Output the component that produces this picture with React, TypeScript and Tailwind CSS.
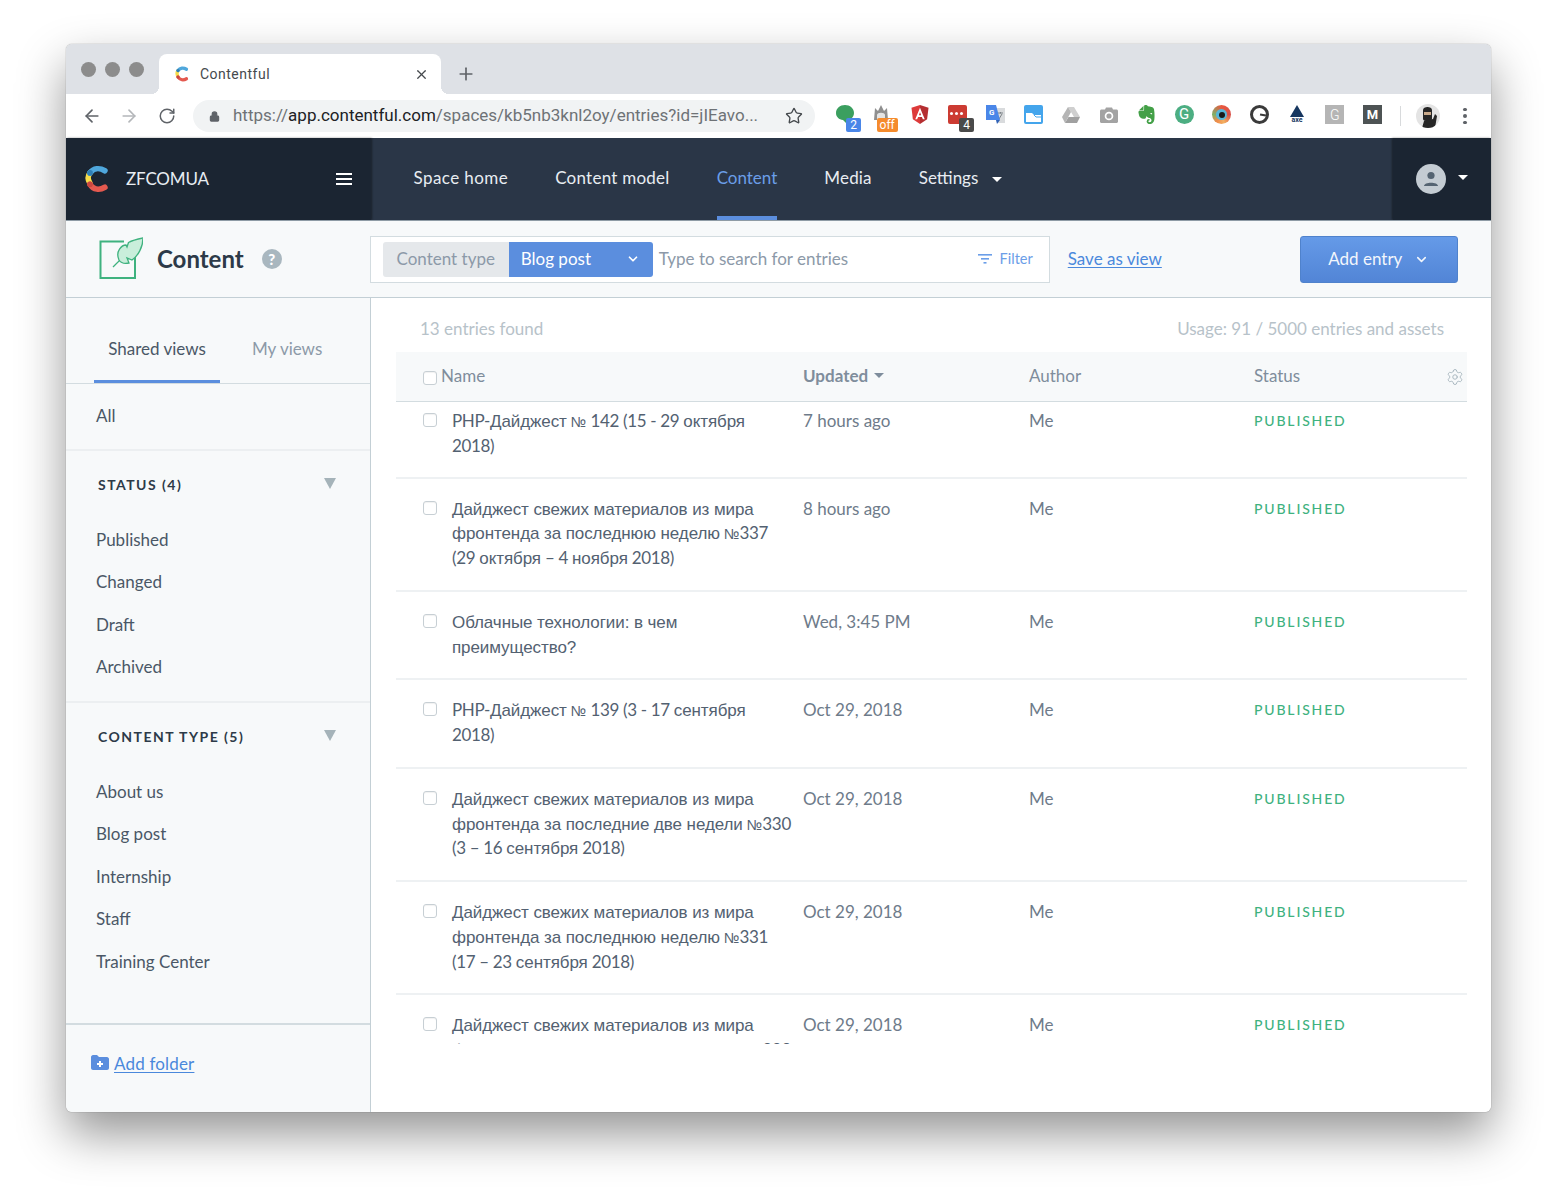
import { ArrowLeft, ArrowRight, ChevronDown, Lock, Plus, RotateCw, Settings, Star, X } from "lucide-react";
import { SiEvernote } from "react-icons/si";

const FONT = "font-['Lato','Liberation_Sans',sans-serif]";

const statusItems = ["Published", "Changed", "Draft", "Archived"];
const typeItems = ["About us", "Blog post", "Internship", "Staff", "Training Center"];

interface Entry {
  lines: string[];
  updated: string;
}

const entries: Entry[] = [
  { lines: ["PHP-Дайджест № 142 (15 - 29 октября", "2018)"], updated: "7 hours ago" },
  { lines: ["Дайджест свежих материалов из мира", "фронтенда за последнюю неделю №337", "(29 октября – 4 ноября 2018)"], updated: "8 hours ago" },
  { lines: ["Облачные технологии: в чем", "преимущество?"], updated: "Wed, 3:45 PM" },
  { lines: ["PHP-Дайджест № 139 (3 - 17 сентября", "2018)"], updated: "Oct 29, 2018" },
  { lines: ["Дайджест свежих материалов из мира", "фронтенда за последние две недели №330", "(3 – 16 сентября 2018)"], updated: "Oct 29, 2018" },
  { lines: ["Дайджест свежих материалов из мира", "фронтенда за последнюю неделю №331", "(17 – 23 сентября 2018)"], updated: "Oct 29, 2018" },
  { lines: ["Дайджест свежих материалов из мира", "фронтенда за последние две недели №329"], updated: "Oct 29, 2018" },
];

// cyrillic falls back to a helvetica-like face in the app, latin stays in the ui font
function MixedLine({ text }: { text: string }) {
  const parts = text.split(/([А-Яа-яЁё:?]+(?: [А-Яа-яЁё:?]+)*|№)/);
  return (
    <div className="h-[24.75px]">
      {parts.map((part, i) =>
        i % 2 === 1 ? (
          <span
            key={i}
            className={
              part === "№"
                ? "font-['Liberation_Sans',sans-serif] text-[14.5px]"
                : "font-['Liberation_Sans',sans-serif] tracking-[-0.005em]"
            }
          >
            {part}
          </span>
        ) : (
          <span key={i} className="tracking-[-0.02em]">
            {part}
          </span>
        ),
      )}
    </div>
  );
}

function ContentfulLogo({ size }: { size: number }) {
  return (
    <svg width={size} height={size} viewBox="0 0 28 32" fill="none" strokeLinecap="round" strokeWidth="6.5">
      <path d="M6 21 C3 16 3 13 6 9" stroke="#f7dd4a" />
      <path d="M6 9 C10 3.5 17 3 23 6.5" stroke="#4fa7dc" />
      <path d="M6 22 C10 28.5 17 29 23 25.5" stroke="#e4594f" />
      <circle cx="6" cy="9" r="3.25" fill="#2f7fb5" />
      <circle cx="6" cy="22" r="3.25" fill="#c9483f" />
    </svg>
  );
}

function Badge({ text, className }: { text: string; className: string }) {
  return (
    <span className={`absolute top-[17px] flex h-[14px] items-center justify-center rounded-[2px] font-['Roboto',sans-serif] text-[12px] leading-none text-white ${className}`}>
      {text}
    </span>
  );
}

function Ext({ children }: { children: React.ReactNode }) {
  return <div className="relative flex h-[30px] w-[37.7px] items-center justify-center pb-[3px]">{children}</div>;
}

function Extensions() {
  return (
    <div className="flex items-center">
      <Ext>
        <svg width="18" height="19" viewBox="0 0 18 19">
          <path d="M9 0 C14 0 18 3.4 18 8 C18 12.6 14 15 11 15 L11 19 L7 15 C3 14.6 0 12 0 8 C0 3.4 4 0 9 0 Z" fill="#3b9f5f" />
        </svg>
        <Badge text="2" className="left-[20px] w-[15px] bg-[#4a86e8]" />
      </Ext>
      <Ext>
        <svg width="16" height="15" viewBox="0 0 16 15" className="mb-[4px] mr-[3px]">
          <path d="M1 15 L2 3 L5 6 L8 0 L11 6 L14 3 L15 15 Z" fill="#8f8f8f" />
          <path d="M4 10 C4 7 12 7 12 10 V15 H4 Z" fill="#e4e4e4" />
        </svg>
        <Badge text="off" className="left-[13px] w-[21px] bg-[#f58b2c]" />
      </Ext>
      <Ext>
        <svg width="18" height="19" viewBox="0 0 18 20">
          <path d="M9 0 L18 3 L16.5 15 L9 20 Z" fill="#b52e31" />
          <path d="M9 0 L0 3 L1.5 15 L9 20 Z" fill="#dd3a3a" />
          <path d="M9 3 L4 15 H6 L7 12.5 H11 L12 15 H14 Z M7.8 10.8 L9 7.5 L10.2 10.8 Z" fill="#fff" />
        </svg>
      </Ext>
      <Ext>
        <span className="flex h-[19px] w-[19px] items-center gap-[2px] rounded-[2px] bg-[#cc3b32] pl-[2px] pb-[2px]">
          <i className="h-[3px] w-[3px] rounded-full bg-white" />
          <i className="h-[3px] w-[3px] rounded-full bg-white" />
          <i className="h-[3px] w-[3px] rounded-full bg-white" />
        </span>
        <Badge text="4" className="left-[20px] w-[15px] bg-[#4a4a4a]" />
      </Ext>
      <Ext>
        <svg width="19" height="19" viewBox="0 0 19 19">
          <path d="M8 3 H19 V18 H11 Z" fill="#d9dbdd" />
          <path d="M12 8 H17 M14.5 7 V8.5 M13 14 L16 9" stroke="#7d8388" strokeWidth="1" fill="none" />
          <path d="M0 0 H10 L14 15 H0 Z" fill="#4a86e8" />
          <path d="M10 15 H14 L11 19 Z" fill="#2f62b8" />
          <text x="3" y="10" fontSize="8" fontWeight="700" fill="#fff" fontFamily="Roboto">G</text>
        </svg>
      </Ext>
      <Ext>
        <svg width="19" height="19" viewBox="0 0 19 19">
          <rect width="19" height="19" rx="2" fill="#44a5ec" />
          <path d="M2 8 H8 L10 10 H17 V17 H2 Z" fill="#fff" />
          <path d="M10 10 L12 12 H17" stroke="#44a5ec" strokeWidth="1" fill="none" />
        </svg>
      </Ext>
      <Ext>
        <svg width="18" height="16" viewBox="0 0 18 16">
          <path d="M6 0 H12 L18 10 H12 Z" fill="#cfcfcf" />
          <path d="M6 0 L0 10 L3 16 L9 5 Z" fill="#b5b5b5" />
          <path d="M3 16 H15 L18 10 H6.5 Z" fill="#a0a0a0" />
        </svg>
      </Ext>
      <Ext>
        <svg width="18" height="16" viewBox="0 0 18 16">
          <path d="M1.5 2.5 H5 L6 0.5 H12 L13 2.5 H16.5 C17.3 2.5 18 3.2 18 4 V14.5 C18 15.3 17.3 16 16.5 16 H1.5 C0.7 16 0 15.3 0 14.5 V4 C0 3.2 0.7 2.5 1.5 2.5 Z" fill="#a3a3a3" />
          <circle cx="9" cy="9" r="4.3" fill="#fff" />
          <circle cx="9" cy="9" r="2.6" fill="#a3a3a3" />
        </svg>
      </Ext>
      <Ext>
        <SiEvernote size={19} className="text-[#43a047]" />
      </Ext>
      <Ext>
        <span className="flex h-[19px] w-[19px] items-center justify-center rounded-full bg-[#4cae82] font-['Roboto',sans-serif] text-[15px] font-normal leading-none text-white">G</span>
      </Ext>
      <Ext>
        <span className="flex h-[19px] w-[19px] items-center justify-center rounded-full bg-[conic-gradient(#e9583f,#d8504a_25%,#f3b061_45%,#ef8b4a_60%,#7fb069_75%,#e9583f)]">
          <span className="flex h-[11px] w-[11px] items-center justify-center rounded-full bg-[#58b6d8]">
            <span className="h-[6px] w-[6px] rounded-full bg-[#1a1a1a]" />
          </span>
        </span>
      </Ext>
      <Ext>
        <span className="flex h-[19px] w-[19px] items-center justify-end rounded-full border-[3px] border-[#3a3a3a]">
          <span className="h-[2px] w-[6px] rotate-[10deg] bg-[#3a3a3a]" />
        </span>
      </Ext>
      <Ext>
        <div className="flex flex-col items-center">
          <svg width="14" height="12" viewBox="0 0 14 12"><path d="M7 0 L14 12 H0 Z" fill="#16365f" /></svg>
          <span className="font-['Roboto',sans-serif] text-[7px] font-bold leading-[7px] text-[#16365f]">axe</span>
        </div>
      </Ext>
      <Ext>
        <span className="flex h-[19px] w-[19px] items-center justify-center bg-[#b5b5b5] font-['Roboto',sans-serif] text-[14px] font-light leading-none text-white">G</span>
      </Ext>
      <Ext>
        <span className="flex h-[19px] w-[19px] items-center justify-center bg-[#4d5354] font-['Roboto',sans-serif] text-[13px] font-bold leading-none text-white">M</span>
      </Ext>
      <span className="ml-[9px] h-[20px] w-px bg-[#d8dadc]" />
      <span className="ml-[15px] flex h-[24px] w-[24px] items-end justify-center overflow-hidden rounded-full bg-[#e4e4e4]">
        <svg width="20" height="22" viewBox="0 0 20 22">
          <path d="M5 4 C5 0 14 0 14 4 V13 C14 16 5 16 5 13 Z" fill="#262626" />
          <rect x="6" y="6" width="7" height="3" fill="#c9a98a" />
          <path d="M4 22 L6 15 L15 13 L17 8 L19 10 L17 22 Z" fill="#262626" />
        </svg>
      </span>
      <span className="ml-[23px] flex flex-col gap-[3px]">
        <i className="h-[3.5px] w-[3.5px] rounded-full bg-[#5f6368]" />
        <i className="h-[3.5px] w-[3.5px] rounded-full bg-[#5f6368]" />
        <i className="h-[3.5px] w-[3.5px] rounded-full bg-[#5f6368]" />
      </span>
    </div>
  );
}

function Caret({ className }: { className: string }) {
  return <span className={`inline-block h-0 w-0 border-x-[5px] border-t-[5px] border-x-transparent ${className}`} />;
}

function NavItem({ label, spacing, active, caret }: { label: string; spacing?: string; active?: boolean; caret?: boolean }) {
  return (
    <div className={`mx-[23.5px] flex h-full items-center border-b-[4px] pt-[2px] ${spacing ?? ""} ${active ? "border-[#5b8ede] text-[#6b9ee8]" : "border-transparent text-[#e8edf2]"}`}>
      {label}
      {caret && <Caret className="ml-[14px] mt-[3px] border-t-white" />}
    </div>
  );
}

function FilterGroup({ title, items }: { title: string; items: string[] }) {
  return (
    <div>
      <div className="flex items-center justify-between pl-[32px] pr-[34px] pt-[23px]">
        <span className="text-[14px] font-bold leading-[22px] tracking-[0.105em] text-[#2d3a48]">{title}</span>
        <Caret className="mb-[3px] border-x-[6px] border-t-[11px] border-t-[#a5b3b9]" />
      </div>
      <ul className="mt-[22.5px]">
        {items.map((item) => (
          <li key={item} className="h-[42.5px] pl-[30px] leading-[42.5px] text-[#4a5766]">
            {item}
          </li>
        ))}
      </ul>
    </div>
  );
}

function Checkbox() {
  return <span className="block h-[14px] w-[14px] rounded-[3px] border border-[#c7cfd4] bg-white shadow-[inset_0_1px_1px_rgba(0,0,0,0.06)]" />;
}

export default function App() {
  return (
    <div className={`h-[1200px] w-full overflow-hidden bg-white px-[66px] pt-[44px] ${FONT}`}>
      <div className="flex h-[1068px] w-[1425px] flex-col overflow-hidden rounded-[6px] text-[17px] shadow-[0_0_1px_rgba(0,0,0,0.6),0_22px_48px_rgba(0,0,0,0.42)]">
        {/* Tab strip */}
        <div className="flex h-[50px] shrink-0 items-end bg-[#dee1e6] pl-[15px]">
          <div className="mb-[17px] flex gap-[9px]">
            <span className="h-[15px] w-[15px] rounded-full bg-[#8c8c8c]" />
            <span className="h-[15px] w-[15px] rounded-full bg-[#8c8c8c]" />
            <span className="h-[15px] w-[15px] rounded-full bg-[#8c8c8c]" />
          </div>
          <div className="relative ml-[15px] flex h-[40px] w-[282px] items-center rounded-t-[8px] bg-white pl-[15px] pr-[12px] font-['Roboto',sans-serif] text-[14px] text-[#45494d]">
            <ContentfulLogo size={16} />
            <span className="ml-[10px] flex-1 tracking-[0.035em]">Contentful</span>
            <X size={15} strokeWidth={2} className="text-[#45494d]" />
            <span className="absolute -left-2 bottom-0 h-2 w-2 bg-[radial-gradient(circle_at_0_0,transparent_8px,white_8px)]" />
            <span className="absolute -right-2 bottom-0 h-2 w-2 bg-[radial-gradient(circle_at_100%_0,transparent_8px,white_8px)]" />
          </div>
          <Plus size={20} strokeWidth={2} className="mb-[10px] ml-[15px] text-[#5f6368]" />
        </div>

        {/* Toolbar */}
        <div className="flex h-[44px] shrink-0 items-center bg-white pl-[16px]">
          <ArrowLeft size={20} className="text-[#5f6368]" />
          <ArrowRight size={20} className="ml-[17px] text-[#b4b7ba]" />
          <RotateCw size={18} className="ml-[19px] text-[#5f6368]" />
          <div className="ml-[17px] flex h-[32px] w-[622px] items-center rounded-full bg-[#f1f3f4] pl-[16px] pr-[12px] font-['Roboto',sans-serif] text-[17px]">
            <Lock size={11} className="fill-[#5f6368] text-[#5f6368]" strokeWidth={2.5} />
            <span className="ml-[13px] flex-1 whitespace-nowrap text-[#6e7276]">
              https://<span className="text-[#202124]">app.contentful.com</span>/spaces/kb5nb3knl2oy/entries?id=jIEavo...
            </span>
            <Star size={18} strokeWidth={1.8} className="text-[#45494d]" />
          </div>
          <div className="ml-[11px]">
            <Extensions />
          </div>
        </div>

        {/* App nav */}
        <div className="flex h-[82px] shrink-0 bg-[#2a3647]">
          <div className="flex w-[305px] items-center bg-[#1b2532] pl-[17px] pr-[19px] shadow-[1px_0_2px_rgba(0,0,0,0.4)]">
            <ContentfulLogo size={28} />
            <span className="ml-[15px] flex-1 text-[17px] tracking-[-0.01em] text-[#e8edf2]">ZFCOMUA</span>
            <span className="flex w-[16px] flex-col gap-[3px]">
              <i className="h-[2px] bg-white" />
              <i className="h-[2px] bg-white" />
              <i className="h-[2px] bg-white" />
            </span>
          </div>
          <div className="ml-[19px] flex h-full flex-1 items-center">
            <NavItem label="Space home" spacing="tracking-[0.025em]" />
            <NavItem label="Content model" spacing="tracking-[0.015em]" />
            <NavItem label="Content" active />
            <NavItem label="Media" spacing="tracking-[0.01em]" />
            <NavItem label="Settings" caret />
          </div>
          <div className="flex w-[98px] items-center bg-[#1b2532] pl-[23px] shadow-[-1px_0_2px_rgba(0,0,0,0.4)]">
            <span className="flex h-[30px] w-[30px] items-center justify-center rounded-full bg-[#c4ccd3]">
              <svg width="18" height="18" viewBox="0 0 18 18" fill="#556472">
                <circle cx="9" cy="5.5" r="3.6" />
                <path d="M2 16 C2 11.5 16 11.5 16 16 Z" />
              </svg>
            </span>
            <Caret className="mb-[3px] ml-[12px] border-t-white" />
          </div>
        </div>

        {/* Workbench header */}
        <div className="flex h-[78px] shrink-0 items-center border-y border-b-[#c3cfd5] border-t-[#8e9ba5] bg-[#f7f9fa] pl-[33px]">
          <svg width="44" height="44" viewBox="0 0 44 44" fill="none">
            <path d="M25 4.5 H1.5 V41 H36 V19" stroke="#3fb27f" strokeWidth="2" />
            <path d="M14 30 C21 23 27 17 33 12" stroke="#3fb27f" strokeWidth="1.3" />
            <path d="M20 23 C16 14 23 8 27 8 L28 10 L29.5 5.5 C34 3 39 2 44 1 C44 10 39 19 33 23 L28 21 L30 26 C26 27 22 26 20 23 Z" fill="#c9eedb" stroke="#3fb27f" strokeWidth="1.3" />
          </svg>
          <span className="ml-[14px] text-[24px] font-bold leading-none text-[#2d3a48]">Content</span>
          <span className="ml-[18px] flex h-[20px] w-[20px] items-center justify-center rounded-full bg-[#a9b7bf] text-[15px] font-black leading-none text-white">?</span>
          <div className="ml-[88px] flex h-[47px] w-[680px] items-center border border-[#d3dce0] bg-white pl-[12px] pr-[16px]">
            <span className="flex h-[35px] w-[126px] items-center justify-center rounded-l-[3px] bg-[#e5e8eb] text-[#8c99a8]">Content type</span>
            <span className="flex h-[35px] w-[144px] items-center justify-between rounded-r-[3px] bg-[#5b8ede] pl-[12px] pr-[13px] text-white">
              Blog post
              <ChevronDown size={14} strokeWidth={3} />
            </span>
            <span className="ml-[6px] flex-1 text-[#8c99a8]">Type to search for entries</span>
            <svg width="14" height="10" viewBox="0 0 14 10" fill="#6b9ee8">
              <rect width="14" height="1.6" />
              <rect x="3" y="4" width="8" height="1.6" />
              <rect x="5.5" y="8" width="3" height="1.6" />
            </svg>
            <span className="ml-[8px] text-[14.5px] text-[#6b9ee8]">Filter</span>
          </div>
          <span className="ml-[18px] text-[#4a88dc] underline underline-offset-2">Save as view</span>
          <div className="ml-[138px] flex h-[47px] w-[158px] items-center justify-center gap-[12px] rounded-[3px] border border-[#4f82cc] bg-gradient-to-b from-[#659ae8] to-[#5285d6] text-[#f2f6fc]">
            Add entry
            <ChevronDown size={15} strokeWidth={2.5} />
          </div>
        </div>

        <div className="flex min-h-0 flex-1">
          {/* Sidebar */}
          <aside className="flex w-[305px] shrink-0 flex-col border-r border-[#c3cfd5] bg-[#f7f9fa]">
            <div className="flex h-[86px] shrink-0 items-end border-b border-[#d3dce0] pl-[28px]">
              <div className="flex h-[85px] w-[126px] items-center justify-center border-b-[3px] border-[#5b8ede] pt-[20px] text-[#4a5766]">Shared views</div>
              <div className="flex h-[85px] items-center pl-[32px] pt-[16px] text-[#8c99a8]">My views</div>
            </div>
            <div className="flex h-[67px] shrink-0 items-center border-b-2 border-[#eceff1] pb-[2px] pl-[30px] text-[#4a5766]">All</div>
            <div className="h-[252px] shrink-0 border-b-2 border-[#eceff1]">
              <FilterGroup title="STATUS (4)" items={statusItems} />
            </div>
            <div className="h-[322px] shrink-0 border-b-2 border-[#d3dce0]">
              <FilterGroup title="CONTENT TYPE (5)" items={typeItems} />
            </div>
            <div className="flex flex-1 items-center pb-[10px] pl-[25px]">
              <svg width="18" height="15" viewBox="0 0 18 15" className="mb-[3px]">
                <path d="M0 2 C0 1 1 0 2 0 H6 L8 2 H16 C17 2 18 3 18 4 V13 C18 14 17 15 16 15 H2 C1 15 0 14 0 13 Z" fill="#5b8ede" />
                <path d="M8 6 H10 V8 H12 V10 H10 V12 H8 V10 H6 V8 H8 Z" fill="#fff" />
              </svg>
              <span className="ml-[5px] tracking-[0.01em] text-[#4a88dc] underline underline-offset-2">Add folder</span>
            </div>
          </aside>

          {/* Entries */}
          <main className="min-w-0 flex-1 bg-white pl-[25px] pr-[24px]">
            <div className="flex h-[54px] items-center justify-between pl-[24px] pr-[23px] pt-[8px] text-[#b7c2c9]">
              <span>13 entries found</span>
              <span>Usage: 91 / 5000 entries and assets</span>
            </div>
            <div className="flex h-[50px] items-center border-b border-[#d3dce0] bg-[#f7f9fa] text-[#7f8d9c]">
              <div className="flex w-[407px] items-center pl-[27px]">
                <span className="mt-[3px]"><Checkbox /></span>
                <span className="mb-[2px] ml-[4px]">Name</span>
              </div>
              <div className="mb-[2px] flex w-[226px] items-center font-bold">
                Updated
                <Caret className="ml-[6px] border-t-[#7f8d9c]" />
              </div>
              <div className="mb-[2px] w-[225px]">Author</div>
              <div className="mb-[2px] flex-1">Status</div>
              <Settings size={18} strokeWidth={1.3} className="mr-[3px] text-[#a9b7bf]" />
            </div>
            <div className="h-[642px] overflow-hidden">
              {entries.map((entry, i) => (
                <div
                  key={i}
                  className={`flex border-b-2 border-[#eef1f3] leading-[24.75px] ${i === 0 ? "pb-[18px] pt-[7px]" : "pb-[19px] pt-[18px]"}`}
                >
                  <div className="w-[56px] shrink-0 pl-[27px] pt-[4px]">
                    <Checkbox />
                  </div>
                  <div className="w-[351px] shrink-0 whitespace-nowrap text-[#536171]">
                    {entry.lines.map((line) => (
                      <MixedLine key={line} text={line} />
                    ))}
                  </div>
                  <div className="w-[226px] shrink-0 text-[#6e7b8a]">{entry.updated}</div>
                  <div className="w-[225px] shrink-0 text-[#6e7b8a]">Me</div>
                  <div className="text-[14px] font-medium tracking-[0.13em] text-[#3fb27f]">PUBLISHED</div>
                </div>
              ))}
            </div>
          </main>
        </div>
      </div>
    </div>
  );
}
